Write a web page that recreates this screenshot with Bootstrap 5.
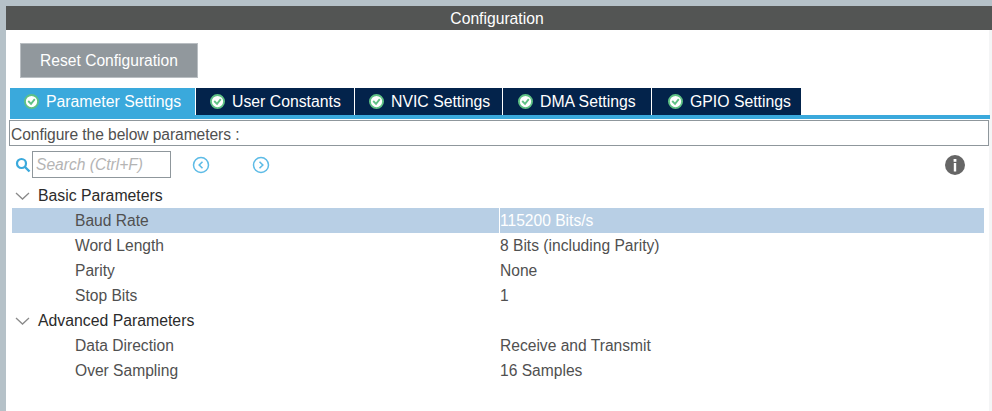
<!DOCTYPE html>
<html lang="en">
<head>
  <meta charset="UTF-8">
  <meta name="viewport" content="width=device-width, initial-scale=1.0">
  <title>Configuration</title>
  <link href="https://cdn.jsdelivr.net/npm/bootstrap@5.3.0/dist/css/bootstrap.min.css" rel="stylesheet">
  <style>
    html, body { height: 100%; }
    body {
      background-color: #b5c1c8;
      font-family: "Liberation Sans", Arial, sans-serif;
      font-size: 15.6px;
      color: #505050;
      overflow: hidden;
      padding: 6px 0 0 6px;
    }
    .config-title {
      height: 24px;
      padding-right: 4px;
      background-color: #535554;
      color: #fff;
      line-height: 26px;
      font-size: 15.7px;
    }
    .config-body {
      height: 381px;
      background-color: #fff;
      padding: 13px 0 0 3px;
      border-right: 3px solid #f4f5f6;
    }
    .reset-btn {
      width: 178px;
      height: 35px;
      margin-left: 11px;
      padding: 0;
      border: 1px solid #b9bec2;
      border-radius: 0;
      background-color: #91989d;
      color: #fff;
      font-size: 15.6px;
    }
    .tab-strip {
      margin-top: 10px;
      margin-left: 1px;
      margin-right: -1px;
      border-bottom: 4px solid #3aa9dc;
    }
    .tab-item {
      height: 27px;
      background-color: #03234b;
      color: #fff;
      margin-right: 1px;
      gap: 7px;
      font-size: 15.8px;
      padding-left: 14px;
    }
    .tab-item.active-tab { background-color: #3aa9dc; }
    .tab-params { width: 185px; }
    .tab-user { width: 158px; }
    .tab-nvic { width: 147px; }
    .tab-dma { width: 148px; padding-left: 15px; }
    .tab-gpio { width: 149px; padding-left: 16px; }
    .tab-check { width: 15px; height: 15px; flex: none; }
    .hint-box {
      height: 26px;
      margin-top: 1px;
      border: 1px solid #8f979c;
      padding: 2px 0 0 1px;
      line-height: 24px;
      letter-spacing: -.065px;
    }
    .search-row { height: 37px; padding-left: 6px; padding-right: 24px; }
    .search-box {
      width: 139px;
      height: 27px;
      margin-left: 1px;
      border: 1px solid #8f979c;
      border-radius: 0;
      padding: 0 3px;
      font-size: 15.6px;
      font-style: italic;
      box-shadow: none;
    }
    .search-box::placeholder { color: #b4b4b4; }
    .nav-arrow { width: 18px; height: 18px; }
    .nav-back { margin-left: 21px; }
    .nav-next { margin-left: 42px; }
    .param-tree { margin-left: 3px; margin-right: 5px; }
    .tree-head {
      height: 25px;
      line-height: 25px;
      color: #2b2b2b;
      padding-left: 3px;
      font-size: 15.8px;
    }
    .tree-row { height: 25px; line-height: 25px; }
    .tree-row.picked { background-color: #b8cfe5; }
    .tree-row.picked .tree-val { color: #fff; }
    .tree-name { width: 488px; padding-left: 63px; flex: none; border-right: 1px solid transparent; }
    .tree-row.picked .tree-name { border-right-color: #fff; }
  </style>
</head>
<body>
  <div class="config-title text-center">Configuration</div>
  <div class="config-body">
    <button type="button" class="btn reset-btn">Reset Configuration</button>

    <div class="tab-strip d-flex">
      <div class="tab-item tab-params active-tab d-flex align-items-center">
        <svg class="tab-check" viewBox="0 0 16 16"><circle cx="8" cy="8" r="7" fill="#fff" stroke="#5fc184" stroke-width="2"/><path d="M4.5 7.5 7.5 10.5 11.5 5.5" fill="none" stroke="#5fc184" stroke-width="2"/></svg>
        <span>Parameter Settings</span>
      </div>
      <div class="tab-item tab-user d-flex align-items-center">
        <svg class="tab-check" viewBox="0 0 16 16"><circle cx="8" cy="8" r="7" fill="#fff" stroke="#5fc184" stroke-width="2"/><path d="M4.5 7.5 7.5 10.5 11.5 5.5" fill="none" stroke="#5fc184" stroke-width="2"/></svg>
        <span>User Constants</span>
      </div>
      <div class="tab-item tab-nvic d-flex align-items-center">
        <svg class="tab-check" viewBox="0 0 16 16"><circle cx="8" cy="8" r="7" fill="#fff" stroke="#5fc184" stroke-width="2"/><path d="M4.5 7.5 7.5 10.5 11.5 5.5" fill="none" stroke="#5fc184" stroke-width="2"/></svg>
        <span>NVIC Settings</span>
      </div>
      <div class="tab-item tab-dma d-flex align-items-center">
        <svg class="tab-check" viewBox="0 0 16 16"><circle cx="8" cy="8" r="7" fill="#fff" stroke="#5fc184" stroke-width="2"/><path d="M4.5 7.5 7.5 10.5 11.5 5.5" fill="none" stroke="#5fc184" stroke-width="2"/></svg>
        <span>DMA Settings</span>
      </div>
      <div class="tab-item tab-gpio d-flex align-items-center">
        <svg class="tab-check" viewBox="0 0 16 16"><circle cx="8" cy="8" r="7" fill="#fff" stroke="#5fc184" stroke-width="2"/><path d="M4.5 7.5 7.5 10.5 11.5 5.5" fill="none" stroke="#5fc184" stroke-width="2"/></svg>
        <span>GPIO Settings</span>
      </div>
    </div>

    <div class="hint-box">Configure the below parameters :</div>

    <div class="search-row d-flex align-items-center">
      <svg width="16" height="16" viewBox="0 0 16 16"><circle cx="6.5" cy="6.5" r="4.5" fill="none" stroke="#3aa9dc" stroke-width="2.2"/><path d="M10 10 14.5 14.5" stroke="#3aa9dc" stroke-width="2.4"/></svg>
      <input type="text" class="form-control search-box" placeholder="Search (Ctrl+F)">
      <svg class="nav-arrow nav-back" viewBox="0 0 18 18"><circle cx="9" cy="9" r="7.5" fill="none" stroke="#5dbbe6" stroke-width="1.5"/><path d="M10.5 5.8 7.2 9l3.3 3.2" fill="none" stroke="#5dbbe6" stroke-width="1.6"/></svg>
      <svg class="nav-arrow nav-next" viewBox="0 0 18 18"><circle cx="9" cy="9" r="7.5" fill="none" stroke="#5dbbe6" stroke-width="1.5"/><path d="M7.5 5.8 10.8 9l-3.3 3.2" fill="none" stroke="#5dbbe6" stroke-width="1.6"/></svg>
      <svg class="ms-auto" width="20" height="20" viewBox="0 0 20 20"><circle cx="10" cy="10" r="10" fill="#666"/><rect x="8.6" y="4" width="2.8" height="2.8" fill="#fff"/><rect x="8.8" y="8" width="2.4" height="8.5" fill="#fff"/></svg>
    </div>

    <div class="param-tree">
      <div class="tree-head d-flex align-items-center gap-2">
        <svg width="15" height="8" viewBox="0 0 15 8"><path d="M1 1 7.5 7 14 1" fill="none" stroke="#8a8a8a" stroke-width="1.3"/></svg>
        <span>Basic Parameters</span>
      </div>
      <div class="tree-row picked d-flex"><div class="tree-name">Baud Rate</div><div class="tree-val">115200 Bits/s</div></div>
      <div class="tree-row d-flex"><div class="tree-name">Word Length</div><div class="tree-val">8 Bits (including Parity)</div></div>
      <div class="tree-row d-flex"><div class="tree-name">Parity</div><div class="tree-val">None</div></div>
      <div class="tree-row d-flex"><div class="tree-name">Stop Bits</div><div class="tree-val">1</div></div>
      <div class="tree-head d-flex align-items-center gap-2">
        <svg width="15" height="8" viewBox="0 0 15 8"><path d="M1 1 7.5 7 14 1" fill="none" stroke="#8a8a8a" stroke-width="1.3"/></svg>
        <span>Advanced Parameters</span>
      </div>
      <div class="tree-row d-flex"><div class="tree-name">Data Direction</div><div class="tree-val">Receive and Transmit</div></div>
      <div class="tree-row d-flex"><div class="tree-name">Over Sampling</div><div class="tree-val">16 Samples</div></div>
    </div>
  </div>

  <script src="https://cdn.jsdelivr.net/npm/bootstrap@5.3.0/dist/js/bootstrap.bundle.min.js"></script>
</body>
</html>
